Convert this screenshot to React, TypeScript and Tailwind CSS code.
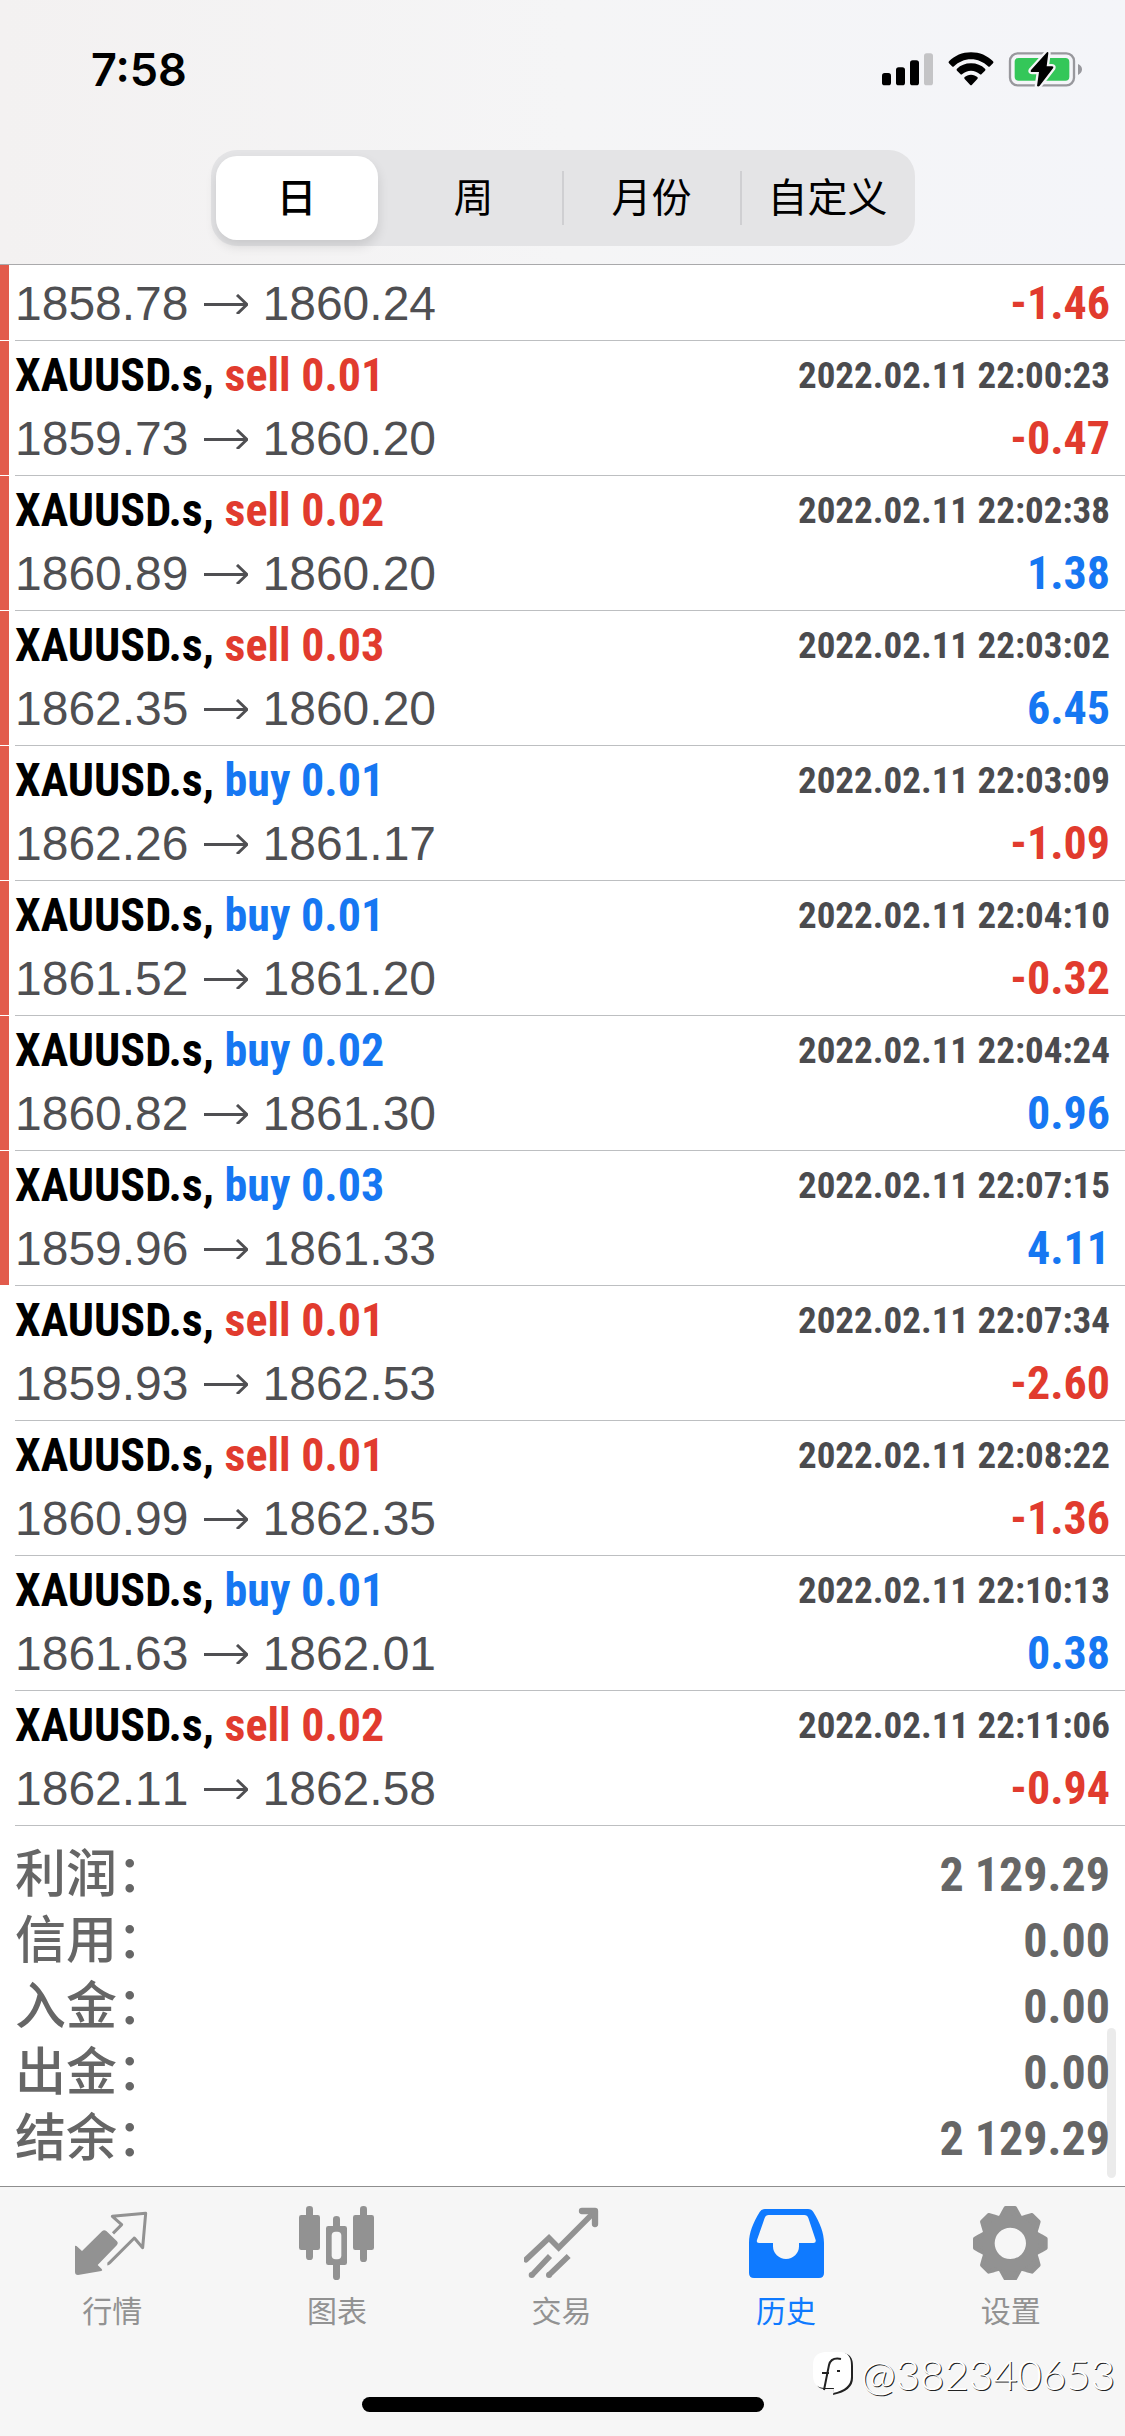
import { ReactNode } from "react";
import clsx from "clsx";

type Deal = {
  side?: "buy" | "sell";
  volume?: string;
  open: string;
  close: string;
  time?: string;
  profit: string;
  marked?: boolean;
};

const DEALS: Deal[] = [
  { open: "1858.78", close: "1860.24", profit: "-1.46", marked: true },
  { side: "sell", volume: "0.01", open: "1859.73", close: "1860.20", time: "2022.02.11 22:00:23", profit: "-0.47", marked: true },
  { side: "sell", volume: "0.02", open: "1860.89", close: "1860.20", time: "2022.02.11 22:02:38", profit: "1.38", marked: true },
  { side: "sell", volume: "0.03", open: "1862.35", close: "1860.20", time: "2022.02.11 22:03:02", profit: "6.45", marked: true },
  { side: "buy", volume: "0.01", open: "1862.26", close: "1861.17", time: "2022.02.11 22:03:09", profit: "-1.09", marked: true },
  { side: "buy", volume: "0.01", open: "1861.52", close: "1861.20", time: "2022.02.11 22:04:10", profit: "-0.32", marked: true },
  { side: "buy", volume: "0.02", open: "1860.82", close: "1861.30", time: "2022.02.11 22:04:24", profit: "0.96", marked: true },
  { side: "buy", volume: "0.03", open: "1859.96", close: "1861.33", time: "2022.02.11 22:07:15", profit: "4.11", marked: true },
  { side: "sell", volume: "0.01", open: "1859.93", close: "1862.53", time: "2022.02.11 22:07:34", profit: "-2.60" },
  { side: "sell", volume: "0.01", open: "1860.99", close: "1862.35", time: "2022.02.11 22:08:22", profit: "-1.36" },
  { side: "buy", volume: "0.01", open: "1861.63", close: "1862.01", time: "2022.02.11 22:10:13", profit: "0.38" },
  { side: "sell", volume: "0.02", open: "1862.11", close: "1862.58", time: "2022.02.11 22:11:06", profit: "-0.94" },
];

const SUMMARY = [
  { label: "利润：", value: "2 129.29" },
  { label: "信用：", value: "0.00" },
  { label: "入金：", value: "0.00" },
  { label: "出金：", value: "0.00" },
  { label: "结余：", value: "2 129.29" },
];

const narrow = "font-['Roboto_Condensed','Liberation_Sans',sans-serif] font-bold";

const StatusBar = () => (
  <div className="flex items-center justify-between pt-[43px] pl-[91px] pr-10">
    <time className="font-['Inter',sans-serif] text-[45px] leading-[54px] font-semibold text-black">7:58</time>
    <svg className="h-[38px] w-[204px]" viewBox="93 62 612 114" aria-hidden="true">
      <rect x="96" y="128" width="27" height="37" rx="8" />
      <rect x="138" y="111" width="27" height="54" rx="8" />
      <rect x="180" y="90" width="27" height="75" rx="8" />
      <rect x="222" y="69" width="27" height="96" rx="8" fill="#c4c4c6" />
      <path d="M363 66c26 0 49 10 66 27q3 3 0 6l-9 9q-3 3-6 0c-14-13-31-21-51-21s-37 8-51 21q-3 3-6 0l-9-9q-3-3 0-6c17-17 40-27 66-27z" />
      <path d="M363 99c17 0 31 6 42 16q3 3 0 6l-10 10q-3 3-6 0c-7-6-16-10-26-10s-19 4-26 10q-3 3-6 0l-10-10q-3-3 0-6c11-10 25-16 42-16z" />
      <path d="M363 133c8 0 14 3 19 7q3 3 0 6l-16 17q-3 3-6 0l-16-17q-3-3 0-6c5-4 11-7 19-7z" />
      <rect x="480" y="69" width="192" height="96" rx="23" fill="none" stroke="#98989d" strokeWidth="7" />
      <path d="M684 101c8 3 12 9 12 16s-4 13-12 17z" fill="#98989d" />
      <rect x="494" y="83" width="164" height="68" rx="12" fill="#34c759" />
      <path
        d="M591 66q4-3 4 3l-5 39h16q6 0 3 6l-40 52q-4 4-8 1l6-42h-21q-6 0-3-6z"
        stroke="#f5f5f7"
        strokeWidth="14"
        strokeLinejoin="round"
        paintOrder="stroke"
      />
    </svg>
  </div>
);

const PeriodTabs = () => (
  <div className="mx-auto mt-[53px] flex h-24 w-[704px] items-center rounded-[26px] bg-[#e4e4e6] pl-[5px] text-[40px] leading-[54px] text-black">
    <button type="button" aria-pressed="true" className="h-[84px] w-[162px] rounded-[21px] bg-white font-medium shadow-[0_6px_12px_rgba(0,0,0,0.12)]">
      日
    </button>
    <button type="button" className="ml-2 h-[54px] w-[176px]">周</button>
    <button type="button" className="h-[54px] w-[178px] border-l-2 border-[#cfcfd2]">月份</button>
    <button type="button" className="h-[54px] w-[174px] border-l-2 border-[#cfcfd2]">自定义</button>
  </div>
);

const DealRow = ({ deal }: { deal: Deal }) => {
  const loss = deal.profit.startsWith("-");
  return (
    <li className="flex">
      <span className={clsx("mb-px w-[9px] shrink-0", deal.marked && "bg-[#e25b4c]")} />
      <div className={clsx("ml-[6px] grow border-b border-[#bdbfc1] pr-[15px] pb-[5px]", deal.side ? "pt-[3px]" : "pt-[7px]")}>
        {deal.side && (
          <div className={clsx(narrow, "flex h-[63px] items-center justify-between leading-[63px]")}>
            <p className="text-[46px] text-black">
              XAUUSD.s,{" "}
              <span className={deal.side === "sell" ? "text-[#e13b2e]" : "text-[#1677f2]"}>
                {deal.side} {deal.volume}
              </span>
            </p>
            <time className="text-[37px] text-[#4b4b4e]">{deal.time}</time>
          </div>
        )}
        <div className="flex h-[63px] items-center justify-between leading-[63px]">
          <p className="flex items-center text-[48px] text-[#4f4f52] [font-kerning:none]">
            {deal.open}
            <svg className="mx-[15px] h-5 w-11" viewBox="0 0 44 20" fill="none" stroke="currentColor" strokeWidth="3">
              <path d="M0 10.500H43M33 1l10 9.500L33 20" />
            </svg>
            {deal.close}
          </p>
          <p className={clsx(narrow, "text-[46px]", loss ? "text-[#e13b2e]" : "text-[#1677f2]")}>{deal.profit}</p>
        </div>
      </div>
    </li>
  );
};

const Summary = () => (
  <dl className="relative px-[15px] pt-4 pb-[14px] leading-[66px] text-[#666]">
    {SUMMARY.map(({ label, value }) => (
      <div key={label} className="flex h-[66px] justify-between">
        <dt className="text-[51px] font-medium">{label}</dt>
        <dd className={clsx(narrow, "text-[48px]")}>{value}</dd>
      </div>
    ))}
    <div className="absolute right-[9px] bottom-2 h-[150px] w-[9px] rounded-full bg-black/8" />
  </dl>
);

const QuotesIcon = () => (
  <svg className="size-[75px]" viewBox="105 75 225 225" fill="currentColor">
    <path d="M105 198q2-3 8 3l13 12 60-59q6-6 13-1l32 31q5 5 0 11l-58 60 12 12q4 4-1 6l-70 12q-9 0-9-9z" />
    <path d="M219 160l26-26-28-25 100-9-9 103-25-29-74 74q-4 4-7 4" fill="none" stroke="currentColor" strokeWidth="9" strokeLinejoin="round" />
  </svg>
);

const ChartIcon = () => (
  <svg className="size-[75px]" viewBox="777 75 225 225" fill="currentColor">
    <rect x="798" y="78" width="21" height="162" rx="10" />
    <rect x="777" y="105" width="63" height="105" rx="7" />
    <rect x="960" y="78" width="21" height="168" rx="10" />
    <rect x="939" y="105" width="63" height="105" rx="7" />
    <path d="M879 138v-20q0-10 10.500-10t10.500 10v20h14q7 0 7 7v103q0 7-7 7h-14v35q0 10-10.500 10t-10.500-10v-35h-14q-7 0-7-7V145q0-7 7-7z" />
    <rect x="875" y="155" width="29" height="83" rx="12" fill="#f6f6f6" />
  </svg>
);

const TradeIcon = () => (
  <svg className="size-[75px]" viewBox="135 75 225 225" fill="none" stroke="currentColor" strokeWidth="17" strokeLinejoin="miter">
    <path d="M141 239l69-65 29 29L346 96" strokeLinecap="round" />
    <path d="M309 93h39v39" strokeWidth="19" strokeLinecap="round" strokeLinejoin="round" />
    <path d="M158 286l55-58M209 286l60-58" />
    <circle cx="158" cy="285" r="9" fill="currentColor" stroke="none" />
    <circle cx="210" cy="285" r="9" fill="currentColor" stroke="none" />
  </svg>
);

const HistoryIcon = () => (
  <svg className="size-[75px]" viewBox="807 75 225 225" fill="currentColor" fillRule="evenodd">
    <path d="M855 87h129q11 0 16 9c20 33 32 62 32 92v91q0 15-15 15H822q-15 0-15-15v-91c0-30 12-59 32-92q5-9 16-9zM866 105q-9 0-12 9l-23 66q-3 9 6 9h42v10a39 38 0 0 0 78 0v-10h43q9 0 7-9l-22-66q-3-9-12-9z" />
  </svg>
);

const SettingsIcon = () => (
  <svg className="size-[75px]" viewBox="-112 -115 225 225" fill="currentColor">
    <g stroke="currentColor" strokeWidth="12" strokeLinejoin="round">
      {[0, 45, 90, 135, 180, 225, 270, 315].map((angle) => (
        <path key={angle} transform={`rotate(${angle})`} d="M-37-70Q-28-78-22-92L-14-106H14L22-92Q28-78 37-70z" />
      ))}
    </g>
    <circle r="66" fill="none" stroke="currentColor" strokeWidth="38" />
  </svg>
);

const TabItem = ({ label, active, children }: { label: string; active?: boolean; children: ReactNode }) => (
  <a
    href="#"
    aria-current={active ? "page" : undefined}
    className={clsx("flex flex-col items-center gap-[14px] text-[30px] leading-9", active ? "text-[#0f7aff]" : "text-[#929292]")}
  >
    {children}
    {label}
  </a>
);

const Watermark = () => (
  <div className="absolute right-[10px] bottom-[36px] flex items-center gap-1 font-['Lato',sans-serif] text-[42px] leading-[52px] font-light text-white [text-shadow:1px_1px_0_#222]">
    <svg className="size-11" viewBox="0 0 44 44" aria-hidden="true">
      <path d="M14 1h16q10 1 10 13v12q0 13-20 17l1-6h-8Q2 38 2 24V14Q2 2 14 1z" fill="#222" />
      <path d="M12 0h16q10 1 10 13v12q0 12-18 16l1-5h-9Q0 36 0 23V13Q0 1 12 0z" fill="#fff" />
      <path d="M28 7q-10-2-12 6l-5 25M9 21h7M24 19h3" fill="none" stroke="#222" strokeWidth="2" />
    </svg>
    @382340653
  </div>
);

const App = () => {
  return (
    <div className="relative flex min-h-screen flex-col bg-white font-['Liberation_Sans','Noto_Sans_CJK_SC',sans-serif]" lang="zh-CN">
      <header className="h-[265px] border-b border-[#a9a9ab] bg-linear-to-r from-[#f3f1f1] via-[#f5f5f6] to-[#f4f5f9]">
        <StatusBar />
        <PeriodTabs />
      </header>
      <main className="grow">
        <ul>
          {DEALS.map((deal) => (
            <DealRow key={deal.time ?? deal.open} deal={deal} />
          ))}
        </ul>
        <Summary />
      </main>
      <footer className="border-t border-[#8e8e8e] bg-[#f6f6f6] pt-[18px]">
        <nav className="grid grid-cols-5 pr-[2px]">
          <TabItem label="行情"><QuotesIcon /></TabItem>
          <TabItem label="图表"><ChartIcon /></TabItem>
          <TabItem label="交易"><TradeIcon /></TabItem>
          <TabItem label="历史" active><HistoryIcon /></TabItem>
          <TabItem label="设置"><SettingsIcon /></TabItem>
        </nav>
        <div className="mx-auto mt-[67px] mb-6 h-[15px] w-[402px] rounded-full bg-black" />
      </footer>
      <Watermark />
    </div>
  );
};

export default App;
